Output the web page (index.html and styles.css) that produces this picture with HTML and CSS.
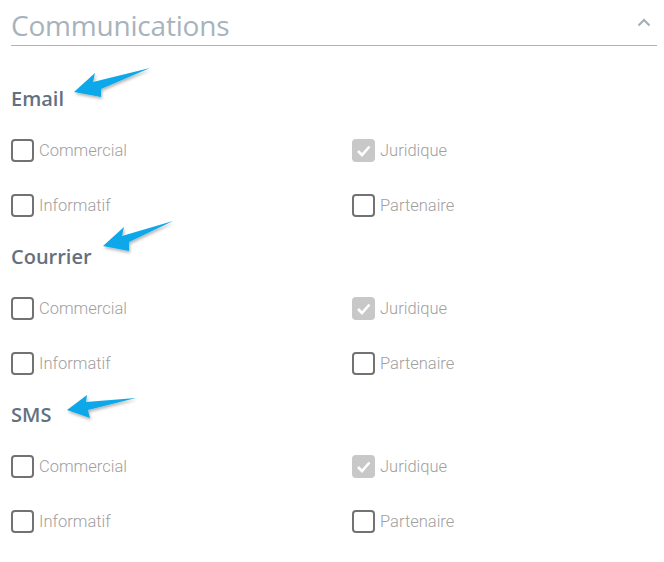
FILE: index.html
```html
<!DOCTYPE html>
<html lang="fr">
<head>
  <meta charset="UTF-8" />
  <meta name="viewport" content="width=device-width, initial-scale=1.0"/>
  <title>Communications</title>
  <link rel="stylesheet" href="styles.css">
</head>
<body>
  <div class="panel">
    <div class="panel-head">
      <h2>Communications</h2>
      <svg class="chevron" width="14" height="9" viewBox="0 0 14 9"><path d="M1.5 7.5 L7 2 L12.5 7.5" fill="none" stroke="#a3adb5" stroke-width="2"/></svg>
    </div>
    <div class="sections">
      <section>
        <h3>Email</h3>
        <div class="grid">
          <label class="opt"><span class="box"></span>Commercial</label>
          <label class="opt"><span class="box checked"></span>Juridique</label>
          <label class="opt"><span class="box"></span>Informatif</label>
          <label class="opt"><span class="box"></span>Partenaire</label>
        </div>
      </section>
      <section>
        <h3>Courrier</h3>
        <div class="grid">
          <label class="opt"><span class="box"></span>Commercial</label>
          <label class="opt"><span class="box checked"></span>Juridique</label>
          <label class="opt"><span class="box"></span>Informatif</label>
          <label class="opt"><span class="box"></span>Partenaire</label>
        </div>
      </section>
      <section>
        <h3>SMS</h3>
        <div class="grid">
          <label class="opt"><span class="box"></span>Commercial</label>
          <label class="opt"><span class="box checked"></span>Juridique</label>
          <label class="opt"><span class="box"></span>Informatif</label>
          <label class="opt"><span class="box"></span>Partenaire</label>
        </div>
      </section>
    </div>
  </div>

  <!-- annotation arrows -->
  <svg class="arrows" width="664" height="562" viewBox="0 0 664 562">
    <defs>
      <filter id="sh" x="-20%" y="-40%" width="140%" height="180%">
        <feDropShadow dx="1" dy="2" stdDeviation="1.5" flood-color="#000" flood-opacity="0.3"/>
      </filter>
    </defs>
    <g fill="#0ca8ea" filter="url(#sh)">
      <polygon points="74,92 95,73 93,82 150,68 101,89 101,97"/>
      <polygon points="103,246 124,227 122,236 173,221 129,242 129,251"/>
      <polygon points="67,410 87,395 86,402 136,398 88,410 90,418"/>
    </g>
  </svg>
</body>
</html>
```

FILE: styles.css
```css
body { margin: 0; background: #fff; font-family: Roboto, "Liberation Sans", sans-serif; }
.panel { padding: 0 7px 0 11px; }
.panel-head { display: flex; align-items: center; justify-content: space-between; height: 45px; border-bottom: 1px solid #a9b4bd; }
.panel-head h2 { margin: 5px 0 0; font-family: "Open Sans", sans-serif; font-weight: 400; font-size: 28px; color: #a7b3bc; letter-spacing: -0.2px; }
.chevron { margin-right: 6px; margin-top: 0; }
.sections { padding-top: 29px; }
h3 { margin: 12px 0; height: 24px; line-height: 24px; font-family: "Open Sans", sans-serif; font-weight: 600; font-size: 20px; color: #627180; }
.grid { display: grid; grid-template-columns: 341px 1fr; grid-auto-rows: 55px; }
.opt { display: flex; align-items: center; gap: 5px; font-size: 16.5px; font-weight: 300; color: #a0a0a0; }
.box { width: 19px; height: 19px; border: 2px solid #727272; border-radius: 4px; }
.box.checked { border-color: #c8c8c8; background: #c8c8c8 url("data:image/svg+xml,%3Csvg xmlns='http://www.w3.org/2000/svg' viewBox='0 0 23 23'%3E%3Cpath d='M6 12 L10 16 L17.5 7.5' fill='none' stroke='white' stroke-width='2.6'/%3E%3C/svg%3E") center/23px 23px no-repeat; }
.arrows { position: absolute; left: 0; top: 0; pointer-events: none; }
```
